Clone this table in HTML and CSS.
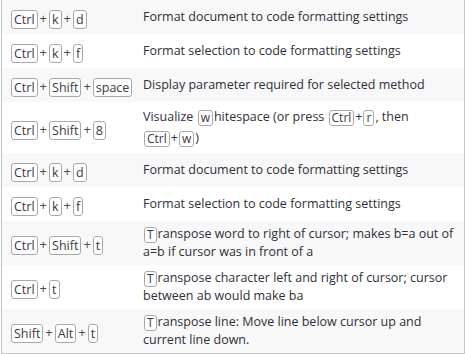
FILE: index.html
```html
<!DOCTYPE html>
<html lang="en">
<head>
<meta charset="utf-8">
<title>Editor shortcuts</title>
<link rel="stylesheet" href="styles.css">
</head>
<body>
<table class="shortcuts">
  <tbody>
    <tr>
      <td class="keys"><kbd>Ctrl</kbd>+<kbd>k</kbd>+<kbd>d</kbd></td>
      <td class="desc">Format document to code formatting settings</td>
    </tr>
    <tr>
      <td class="keys"><kbd>Ctrl</kbd>+<kbd>k</kbd>+<kbd>f</kbd></td>
      <td class="desc">Format selection to code formatting settings</td>
    </tr>
    <tr>
      <td class="keys"><kbd>Ctrl</kbd>+<kbd>Shift</kbd>+<kbd>space</kbd></td>
      <td class="desc">Display parameter required for selected method</td>
    </tr>
    <tr>
      <td class="keys"><kbd>Ctrl</kbd>+<kbd>Shift</kbd>+<kbd>8</kbd></td>
      <td class="desc loose">Visualize <kbd>w</kbd>hitespace (or press <span class="combo"><kbd>Ctrl</kbd>+<kbd>r</kbd></span>, then <span class="combo"><kbd>Ctrl</kbd>+<kbd>w</kbd>)</span></td>
    </tr>
    <tr>
      <td class="keys"><kbd>Ctrl</kbd>+<kbd>k</kbd>+<kbd>d</kbd></td>
      <td class="desc">Format document to code formatting settings</td>
    </tr>
    <tr>
      <td class="keys"><kbd>Ctrl</kbd>+<kbd>k</kbd>+<kbd>f</kbd></td>
      <td class="desc">Format selection to code formatting settings</td>
    </tr>
    <tr>
      <td class="keys"><kbd>Ctrl</kbd>+<kbd>Shift</kbd>+<kbd>t</kbd></td>
      <td class="desc"><kbd>T</kbd>ranspose word to right of cursor; makes b=a out of a=b if cursor was in front of a</td>
    </tr>
    <tr>
      <td class="keys"><kbd>Ctrl</kbd>+<kbd>t</kbd></td>
      <td class="desc"><kbd>T</kbd>ranspose character left and right of cursor; cursor between ab would make ba</td>
    </tr>
    <tr>
      <td class="keys"><kbd>Shift</kbd>+<kbd>Alt</kbd>+<kbd>t</kbd></td>
      <td class="desc"><kbd>T</kbd>ranspose line: Move line below cursor up and current line down.</td>
    </tr>
  </tbody>
</table>
</body>
</html>
```

FILE: styles.css
```css
html, body {
  margin: 0;
  padding: 0;
  background: #fff;
}

body {
  font-family: "Open Sans", "Noto Sans", sans-serif;
  font-size: 12.5px;
  color: #2f2f3a;
}

.shortcuts {
  width: 464px;
  margin: 0 1px;
  border-collapse: collapse;
  table-layout: fixed;
  border-left: 1px solid #c6c6c6;
  border-right: 1px solid #c6c6c6;
  border-bottom: 1px solid #c6c6c6;
}

.shortcuts tr:nth-child(odd) {
  background: #f8f8f8;
}

.shortcuts td {
  vertical-align: middle;
  line-height: 18px;
}

/* key combination column */
.keys {
  width: 114px;
  padding: 9px 10px 5px 7px;
  white-space: nowrap;
  font-size: 13px;
  color: #4a4a52;
}

.keys kbd {
  display: inline-block;
  margin: 0 2px;
  padding: 0 2px;
  line-height: 17px;
  border: 1px solid #a8a8a8;
  border-radius: 3px;
  background: #fff;
  font-family: inherit;
  font-size: 12.5px;
  color: #3a3a44;
  vertical-align: middle;
}

/* description column */
.desc {
  padding: 4px 5px 4px 10px;
}

.desc.loose {
  line-height: 21px;
  padding-bottom: 5px;
}

.combo {
  white-space: nowrap;
}

.desc kbd {
  display: inline-block;
  margin: 0 1px;
  padding: 0 2px;
  line-height: 14px;
  border: 1px solid #a8a8a8;
  border-radius: 3px;
  background: #fff;
  font-family: inherit;
  font-size: 12px;
  color: #3a3a44;
  vertical-align: middle;
}
```
